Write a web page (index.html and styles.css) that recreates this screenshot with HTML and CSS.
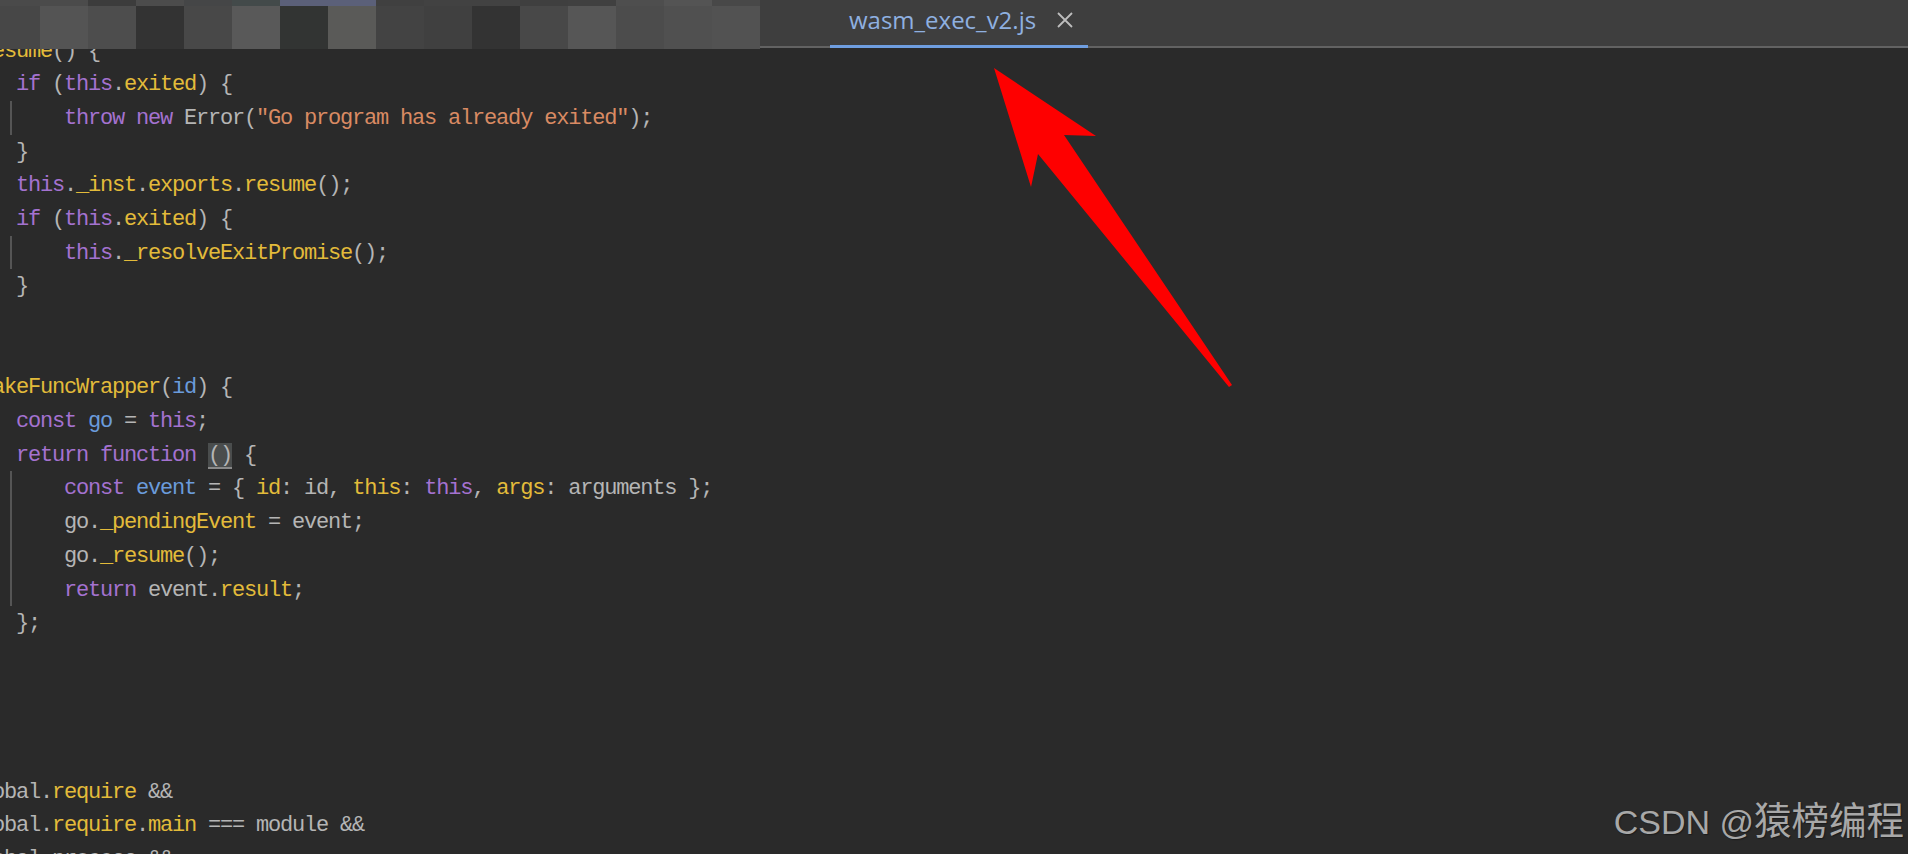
FILE: index.html
```html
<!DOCTYPE html>
<html lang="en">
<head>
<meta charset="utf-8">
<title>wasm_exec_v2.js</title>
<link rel="stylesheet" href="styles.css">
</head>
<body>
<div class="editor">
  <header class="tabbar">
    <div class="mosaic">
      <i class="a4a"></i><i class="a4b"></i><i class="a3c"></i><i class="a4c"></i><i class="a45"></i><i class="a43t"></i><i class="a5b"></i><i class="a5b"></i><i class="a40"></i><i class="a42"></i><i class="a42"></i><i class="a3f"></i><i class="a40"></i><i class="a4e"></i><i class="a54"></i><i class="a48"></i>
      <i class="a47"></i><i class="a54"></i><i class="a4d"></i><i class="a33"></i><i class="a48"></i><i class="a59"></i><i class="a32"></i><i class="a5a"></i><i class="a43"></i><i class="a40"></i><i class="a33"></i><i class="a48"></i><i class="a56"></i><i class="a4c"></i><i class="a50"></i><i class="a52"></i>
    </div>
    <div class="tab">
      <span class="tab-name">wasm_exec_v2.js</span>
      <svg class="tab-close" viewBox="0 0 16 16" width="16" height="16"><path d="M1 1L15 15M15 1L1 15"/></svg>
    </div>
  </header>
  <main class="pane">
    <div class="code">
      <div class="line"> <span class="y">resume</span>() {</div>
      <div class="line">    <span class="k">if</span> (<span class="k">this</span>.<span class="y">exited</span>) {</div>
      <div class="guide">
        <div class="line">        <span class="k">throw new</span> Error(<span class="s">"Go program has already exited"</span>);</div>
      </div>
      <div class="line">    }</div>
      <div class="line">    <span class="k">this</span>.<span class="y">_inst</span>.<span class="y">exports</span>.<span class="y">resume</span>();</div>
      <div class="line">    <span class="k">if</span> (<span class="k">this</span>.<span class="y">exited</span>) {</div>
      <div class="guide">
        <div class="line">        <span class="k">this</span>.<span class="y">_resolveExitPromise</span>();</div>
      </div>
      <div class="line">    }</div>
      <div class="line"></div>
      <div class="line"></div>
      <div class="line"> <span class="y">makeFuncWrapper</span>(<span class="b">id</span>) {</div>
      <div class="line">    <span class="k">const</span> <span class="b">go</span> = <span class="k">this</span>;</div>
      <div class="line">    <span class="k">return function</span> <span class="hl">()</span> {</div>
      <div class="guide">
        <div class="line">        <span class="k">const</span> <span class="b">event</span> = { <span class="y">id</span>: id, <span class="y">this</span>: <span class="k">this</span>, <span class="y">args</span>: arguments };</div>
        <div class="line">        go.<span class="y">_pendingEvent</span> = event;</div>
        <div class="line">        go.<span class="y">_resume</span>();</div>
        <div class="line">        <span class="k">return</span> event.<span class="y">result</span>;</div>
      </div>
      <div class="line">    };</div>
      <div class="line"></div>
      <div class="line"></div>
      <div class="line"></div>
      <div class="line"></div>
      <div class="line">global.<span class="y">require</span> &amp;&amp;</div>
      <div class="line">global.<span class="y">require</span>.<span class="y">main</span> === module &amp;&amp;</div>
      <div class="line">global.process &amp;&amp;</div>
    </div>
  </main>
</div>
<svg class="arrow" viewBox="0 0 1908 854" width="1908" height="854"><polygon points="994,68 1096,136 1064,135 1232,385 1229,387 1038,154 1031,187"/></svg>
<div class="watermark">CSDN @<span class="wm-cjk">猿榜编程</span></div>
</body>
</html>
```
FILE: styles.css
```css
* { box-sizing: border-box; }
html, body { margin: 0; height: 100%; overflow: hidden; background: #2a2a2a; }
.editor { display: flex; flex-direction: column; height: 854px; overflow: hidden; }

.tabbar {
  display: flex; flex: none; height: 48px;
  background: #3e3e3e;
  border-bottom: 2px solid #626262;
  position: relative; z-index: 1;
}
.mosaic {
  display: grid; flex: none;
  grid-template-columns: 40px repeat(15, 48px);
  grid-template-rows: 6px 43px;
  width: 760px; height: 49px;
}
.mosaic i { display: block; }
.a32 { background: #323433; } .a33 { background: #333; } .a3c { background: #3c3c3c; }
.a3f { background: #3f3f3f; } .a40 { background: #404040; } .a42 { background: #424242; }
.a43 { background: #434343; } .a43t { background: #434a4a; } .a45 { background: #454647; }
.a47 { background: #474747; } .a48 { background: #484848; } .a4a { background: #4a4a4a; }
.a4b { background: #4b4b4b; } .a4c { background: #4c4c4c; } .a4d { background: #4d4d4d; }
.a4e { background: #4e4e4e; } .a50 { background: #505050; } .a52 { background: #525252; }
.a54 { background: #545454; } .a56 { background: #565656; } .a59 { background: #595959; }
.a5a { background: #5a5a58; } .a5b { background: #5b6079; }

.tab {
  display: flex; align-items: center; flex: none;
  width: 258px; height: 48px; margin-left: 70px; padding: 0 0 5px 19px;
  border-bottom: 3px solid #6f9ee0;
}
.tab-name { font: 24px "Open Sans", sans-serif; color: #8fb0e0; line-height: 1; white-space: nowrap; }
.tab-close { margin-left: 21px; fill: none; stroke: #bdbdbd; stroke-width: 1.8; }

.pane { flex: 1; overflow: hidden; }
.code {
  margin: -13.5px 0 0 -32px;
  font: 22px/33.7px "Liberation Mono", monospace;
  letter-spacing: -1.2px;
  color: #b5b5b5;
}
.line { height: 33.7px; white-space: pre; }
.guide { position: relative; }
.guide::before {
  content: ""; position: absolute; left: 42px; top: -1px; bottom: 1px;
  width: 2px; background: #555;
}
.k { color: #a472d0; }
.y { color: #e3bb3a; }
.s { color: #d98a63; }
.b { color: #6a9bdb; }
.hl { background: #4a4d4d; box-shadow: inset 0 -2px 0 #8a8a8a; display: inline-block; height: 26px; line-height: 26px; }

.arrow { position: absolute; left: 0; top: 0; fill: #fe0000; z-index: 2; }
.watermark {
  position: absolute; right: 4px; top: 796px; z-index: 3;
  font: 34px/44px "Liberation Sans", sans-serif; color: #a8a8a8;
  text-shadow: 1px 1px 1px #1c1c1c; white-space: nowrap;
}
.wm-cjk { font: 37.5px/44px "Noto Sans CJK SC", sans-serif; }
```
